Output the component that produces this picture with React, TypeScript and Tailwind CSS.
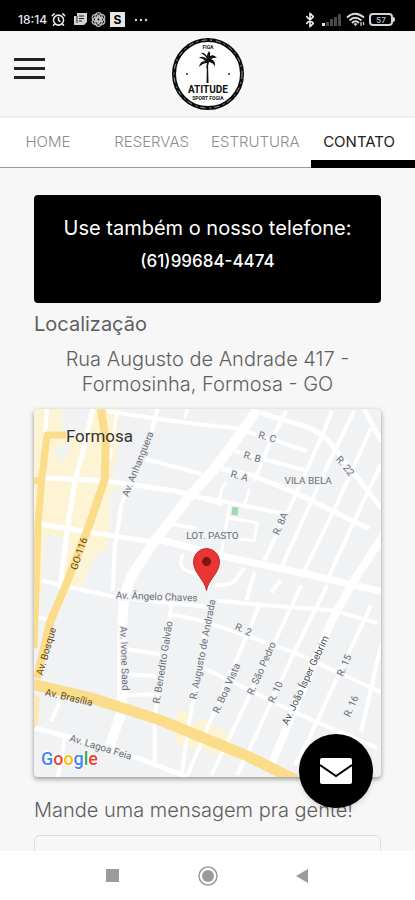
import type { ReactNode } from 'react';
import { AlarmClock, Bluetooth } from 'lucide-react';

const tabs = [
  { href: '#home', label: 'HOME' },
  { href: '#reservas', label: 'RESERVAS' },
  { href: '#estrutura', label: 'ESTRUTURA' },
  { href: '#contato', label: 'CONTATO', active: true },
];

// [path, stroke width]
const streets: [string, number][] = [
  ['M73 2L124 10L181 17L211 20', 4],
  ['M13 0L11 28', 4],
  ['M59 0L51 35L41 72L34 115L26 180', 5],
  ['M83 4L76 50', 3],
  ['M8 69L71 72L141 82L190 95', 5],
  ['M111 50L168 65', 4],
  ['M4 115L58 124L123 134', 5],
  ['M124 0L118 22L88 95L81 139L79 182', 4],
  ['M8 172L28 177L84 189L131 194L181 199', 4],
  ['M134 115L164 120', 4],
  ['M154 0L151 9', 3],
  ['M149 145L147 155Q150 162 158 164L172 169', 3],
  ['M228 4L240 8L271 17Q290 24 298 35L348 99', 5],
  ['M211 22L274 42', 4],
  ['M253 2L236 35L221 72', 4],
  ['M201 42L274 62', 4],
  ['M188 60L220 67L264 85L336 120', 5],
  ['M171 89L251 105', 4],
  ['M193 73L188 80L186 91', 3],
  ['M216 80L214 88L210 97', 3],
  ['M299 2L288 29L261 89L231 152', 4],
  ['M321 2L298 49L248 159', 4],
  ['M338 19L304 95L271 162', 4],
  ['M331 0L348 32', 5],
  ['M348 55L318 119L294 172', 4],
  ['M196 96L194 109L224 114L221 132L191 129', 3],
  ['M194 109L188 145', 3],
  ['M211 159L201 173Q193 178 181 176', 4],
  ['M184 192L225 196L301 202L344 215', 4],
  ['M134 205L171 213L261 244L348 284', 4],
  ['M166 258L171 260L261 304L344 340', 4],
  ['M221 164L213 192', 4],
  ['M247 172L238 184', 4],
  ['M226 197L171 327L154 367', 4],
  ['M268 177L194 334L178 367', 4],
  ['M294 177L261 244L204 367', 4],
  ['M338 197L274 334L262 357', 4],
  ['M348 237L328 324', 4],
  ['M4 209L15 211', 4],
  ['M138 190L136 212L121 310L121 354', 4],
  ['M94 241L126 246', 4],
  ['M93 266L123 268', 4],
  ['M92 287L121 286', 4],
  ['M181 190L171 227L154 324L148 367', 4],
  ['M1 320L40 330L101 349L154 369', 5],
  ['M26 294L17 313', 4],
  ['M31 329L24 369', 4],
];

const avenues: [string, number][] = [
  ['M224 0L204 29L181 60L158 85L123 130L101 162Q90 180 89 205L88 304L75 340', 10],
  ['M123 130L160 140L191 148L271 165L348 183', 7],
  ['M352 124L321 172L314 184L298 214L239 354', 8],
];

const labels: { text: string; x: number; y: number; rotate: number; color?: string }[] = [
  { text: 'Av. Anhanguera', x: 104, y: 55, rotate: -68 },
  { text: 'GO-116', x: 45, y: 145, rotate: -71, color: '#5b4a25' },
  { text: 'R. C', x: 234, y: 28, rotate: 16 },
  { text: 'R. B', x: 219, y: 48, rotate: 16 },
  { text: 'R. A', x: 206, y: 67, rotate: 16 },
  { text: 'R. 22', x: 312, y: 57, rotate: 50 },
  { text: 'R. 8A', x: 247, y: 115, rotate: -66 },
  { text: 'VILA BELA', x: 275, y: 72, rotate: 0 },
  { text: 'LOT. PASTO', x: 179, y: 127, rotate: 0 },
  { text: 'Av. Ângelo Chaves', x: 123, y: 188, rotate: 2 },
  { text: 'Av. Ivone Saad', x: 91, y: 250, rotate: 88 },
  { text: 'R. Benedito Galvão', x: 129, y: 254, rotate: -81 },
  { text: 'R. Augusto de Andrada', x: 169, y: 241, rotate: -79 },
  { text: 'R. Boa Vista', x: 193, y: 280, rotate: -66 },
  { text: 'R. São Pedro', x: 228, y: 260, rotate: -66 },
  { text: 'R. 10', x: 242, y: 284, rotate: -66 },
  { text: 'R. 2', x: 210, y: 221, rotate: 25 },
  { text: 'Av. João Ísper Gebrim', x: 272, y: 272, rotate: -65, color: '#4b4f54' },
  { text: 'R. 15', x: 311, y: 257, rotate: -66 },
  { text: 'R. 16', x: 318, y: 298, rotate: -66 },
  { text: 'Av. Bosque', x: 12, y: 243, rotate: -74, color: '#5b4a25' },
  { text: 'Av. Brasília', x: 35, y: 289, rotate: 13, color: '#5b4a25' },
  { text: 'Av. Lagoa Feia', x: 67, y: 339, rotate: 17 },
];

function StatusBar() {
  return (
    <div className="flex h-[31px] shrink-0 items-center justify-between bg-black pt-2 pr-5 pl-[18px] text-gray-200">
      <div className="flex items-center gap-1">
        <span className="text-xs font-medium">18:14</span>
        <AlarmClock size={15} strokeWidth={2.5} />
        <svg className="ml-1" width="13" height="13" viewBox="0 0 13 13" fill="none">
          <path d="M3 0h10v9l-3 3H0V3h3z" fill="#d4d4d4" />
          <path d="M3 3v7M5 3h5M5 5.5h5M5 8h3" stroke="#222" />
        </svg>
        <svg width="15" height="15" viewBox="0 0 15 15" fill="none" stroke="#c4c4c4" strokeWidth="1.3">
          <ellipse cx="7.5" cy="5" rx="3.5" ry="4.3" />
          <ellipse cx="7.5" cy="5" rx="3.5" ry="4.3" transform="rotate(60 7.5 7.5)" />
          <ellipse cx="7.5" cy="5" rx="3.5" ry="4.3" transform="rotate(120 7.5 7.5)" />
          <ellipse cx="7.5" cy="5" rx="3.5" ry="4.3" transform="rotate(180 7.5 7.5)" />
          <ellipse cx="7.5" cy="5" rx="3.5" ry="4.3" transform="rotate(240 7.5 7.5)" />
          <ellipse cx="7.5" cy="5" rx="3.5" ry="4.3" transform="rotate(300 7.5 7.5)" />
        </svg>
        <span className="flex size-[15px] items-center justify-center bg-gray-200 text-xs font-bold text-black">S</span>
        <svg className="ml-1" width="16" height="4" viewBox="0 0 16 4" fill="#d4d4d4">
          <circle cx="3" cy="2" r="1.2" />
          <circle cx="8" cy="2" r="1.2" />
          <circle cx="13" cy="2" r="1.2" />
        </svg>
      </div>
      <div className="flex items-center">
        <Bluetooth size={16} strokeWidth={2.5} />
        <svg className="ml-1" width="20" height="14" viewBox="0 0 20 14">
          <path d="M0 10h3v3H0z" fill="#e5e5e5" />
          <path d="M4 9h3v4H4zM8 6h3v7H8zM12 4h3v9h-3zM16 1h3v12h-3z" fill="#4a4a4a" />
        </svg>
        <svg className="ml-1" width="19" height="15" viewBox="0 0 19 15" fill="none" stroke="#dcdcdc" strokeWidth="1.8">
          <path d="M1 5.5Q9 -2 18 5.5M3.5 8.5Q9 3 15.5 8.5M6 11Q9.5 7.5 13 11" />
          <path d="M7.5 12L9.5 14L11.5 12L9.5 11z" fill="#dcdcdc" stroke="none" />
          <path d="M15 10v4M17.5 10v3" strokeWidth="1.2" />
        </svg>
        <span className="ml-1 flex h-[13px] w-6 items-center justify-center rounded-sm border-2 border-gray-300 text-[8px] font-bold text-gray-400">57</span>
        <span className="h-[5px] w-[2px] rounded-r-sm bg-gray-300" />
      </div>
    </div>
  );
}

function Logo() {
  return (
    <svg width="74" height="74" viewBox="0 0 74 74" role="img" aria-label="Atitude Sport Fogia">
      <circle cx="37" cy="37" r="34" fill="#fff" stroke="#0c0c0c" strokeWidth="4" />
      <circle cx="37" cy="37" r="34" fill="none" stroke="#999" strokeWidth="1" strokeDasharray="5 3 2 4" />
      <g fill="#111" textAnchor="middle" className="font-['Roboto',sans-serif] font-bold">
        <text x="37" y="12" fontSize="5">FIGA</text>
        <text x="37" y="56" fontSize="10">ATITUDE</text>
        <text x="37" y="63" fontSize="5">SPORT FOGIA</text>
      </g>
      <path d="M36 26h1l.5 20h-2z" fill="#111" />
      <path
        d="M36 22Q31 18 28 21Q32 21 34 24Q29 24 28 30Q32 26 36 26L35 32Q38 28 38 25Q43 26 44 30Q45 24 40 22Q44 20 46 21Q43 17 39 19Q40 16 38 14Q36 17 36 19Q33 15 30 16Q34 18 36 22z"
        fill="#111"
      />
      <circle cx="16" cy="37" r="1" fill="#333" />
      <circle cx="58" cy="37" r="1" fill="#333" />
    </svg>
  );
}

function LocationMap() {
  return (
    <svg
      viewBox="0 0 348 369"
      role="img"
      aria-label="Mapa da localização"
      className="mt-3 block w-full rounded-sm bg-[#f0f2f4] font-['Roboto',sans-serif] shadow-[0_2px_5px_rgba(0,0,0,0.4)]"
    >
      <path d="M0 0H28V22L48 30L56 0H86V30L78 68L90 74L76 84L75 140L62 146L50 174L32 182H0z" fill="#fcf4d4" />
      <path d="M20 40L36 34L34 46L26 54zM12 124L30 130L26 182H8z" fill="#f0f2f4" />
      <path d="M143 302L156 304L158 315L173 312L197 326L204 345L190 350L170 342L141 336z" fill="#fcf4d4" />
      <path d="M0 285L6 290L3 322L0 320z" fill="#fbe7b0" />
      <path d="M199 98l6 1l-1 8l-6-1z" fill="#9edbb0" />

      <g fill="none" stroke="#fff" strokeLinejoin="round">
        {[...streets, ...avenues].map(([d, width]) => (
          <path key={d} d={d} strokeWidth={width} />
        ))}
      </g>

      <g fill="none" stroke="#fbdc8b" strokeLinejoin="round">
        <path d="M67 0L72 32L71 70L56 115L31 179L16 214L3 270" strokeWidth="8" />
        <path d="M32 26H13L8 69L4 115L2 182L0 240M0 72H8" strokeWidth="7" />
        <path d="M-2 276L58 290L124 311L151 322L214 348L262 372" strokeWidth="11" />
      </g>

      <g stroke="#f0f2f4" strokeWidth="3" paintOrder="stroke" textAnchor="middle" fontSize="10">
        {labels.map((label) => (
          <text
            key={label.text}
            transform={`translate(${label.x} ${label.y}) rotate(${label.rotate})`}
            dominantBaseline="central"
            fill={label.color ?? '#6b6f75'}
            strokeOpacity={label.color ? 0 : 0.8}
          >
            {label.text}
          </text>
        ))}
      </g>
      <text x="32" y="33" fontSize="17" fill="#333">Formosa</text>

      <path d="M173 182C172 172 160 165 160 153A13 13 0 0 1 186 153C186 165 174 172 173 182z" fill="#ea3535" stroke="#c5221f" />
      <circle cx="173" cy="153" r="4.5" fill="#7d1512" />

      <text x="7" y="357" fontSize="18" stroke="#fff" strokeWidth="2" paintOrder="stroke" className="font-medium">
        <tspan fill="#4285f4">G</tspan>
        <tspan fill="#ea4335">o</tspan>
        <tspan fill="#fbbc05">o</tspan>
        <tspan fill="#4285f4">g</tspan>
        <tspan fill="#34a853">l</tspan>
        <tspan fill="#ea4335">e</tspan>
      </text>
    </svg>
  );
}

function NavButton({ label, children }: { label: string; children: ReactNode }) {
  return (
    <button type="button" aria-label={label} className="flex size-6 items-center justify-center">
      <svg width="20" height="20" viewBox="0 0 20 20" fill="#9b9b9b">
        {children}
      </svg>
    </button>
  );
}

export default function App() {
  return (
    <div className="flex h-screen flex-col overflow-hidden bg-[#f7f7f7] font-['Inter',sans-serif] text-[#5f5f5f]">
      <StatusBar />

      <header className="grid shrink-0 grid-cols-[1fr_auto_1fr] items-center px-[14px] pt-[6px] pb-[7px]">
        <button type="button" aria-label="Abrir menu" className="flex w-[31px] flex-col gap-[6px] pb-3">
          <span className="h-[3px] w-full bg-[#222]" />
          <span className="h-[3px] w-full bg-[#222]" />
          <span className="h-[3px] w-full bg-[#222]" />
        </button>
        <Logo />
      </header>

      <nav className="grid shrink-0 grid-cols-4 border-b border-[#999] bg-white shadow-[0_-1px_2px_rgba(0,0,0,0.08)]">
        {tabs.map((tab) => (
          <a
            key={tab.href}
            href={tab.href}
            className={
              tab.active
                ? '-mb-px h-[50px] border-b-8 border-black pt-3 pr-2 text-center text-[15px] leading-6 text-[#222]'
                : 'pt-3 pr-2 text-center text-[15px] leading-6 font-light text-[#8c8c8c]'
            }
          >
            {tab.label}
          </a>
        ))}
      </nav>

      <div className="relative min-h-0 flex-1">
        <main className="h-full overflow-hidden px-[34px] pt-[27px]">
          <section className="h-[108px] rounded bg-black pt-5 text-center text-white">
            <h2 className="text-xl leading-[26px]">Use também o nosso telefone:</h2>
            <p className="mt-2 text-[17px] leading-6 font-medium">(61)99684-4474</p>
          </section>

          <h3 className="mt-2 text-xl leading-[26px]">Localização</h3>
          <p className="mt-[10px] text-center text-xl leading-[25px] font-light">
            Rua Augusto de Andrade 417 -<br />
            Formosinha, Formosa - GO
          </p>

          <LocationMap />

          <form className="mt-5">
            <label htmlFor="mensagem" className="block text-xl leading-[26px] font-light">
              Mande uma mensagem pra gente!
            </label>
            <input id="mensagem" className="mt-3 block h-[50px] w-full rounded-md border border-[#dedede] bg-[#f7f7f7] px-3" />
          </form>
        </main>

        <button
          type="button"
          aria-label="Enviar mensagem"
          className="absolute right-[42px] bottom-[43px] flex size-[74px] items-center justify-center rounded-full bg-black shadow-md"
        >
          <svg width="32" height="26" viewBox="0 0 32 26">
            <rect width="32" height="26" rx="2" fill="#fff" />
            <path d="M0 7L16 18L32 7" fill="none" stroke="#000" strokeWidth="2" />
          </svg>
        </button>
      </div>

      <div className="flex h-[49px] shrink-0 items-center justify-center gap-[71px] bg-white">
        <NavButton label="Recentes">
          <rect x="3" y="3" width="13" height="13" />
        </NavButton>
        <NavButton label="Início">
          <circle cx="10" cy="10" r="6" />
          <circle cx="10" cy="10" r="9" fill="none" stroke="#9b9b9b" strokeWidth="1.5" />
        </NavButton>
        <NavButton label="Voltar">
          <path d="M3 10L15 3V17z" />
        </NavButton>
      </div>
    </div>
  );
}
